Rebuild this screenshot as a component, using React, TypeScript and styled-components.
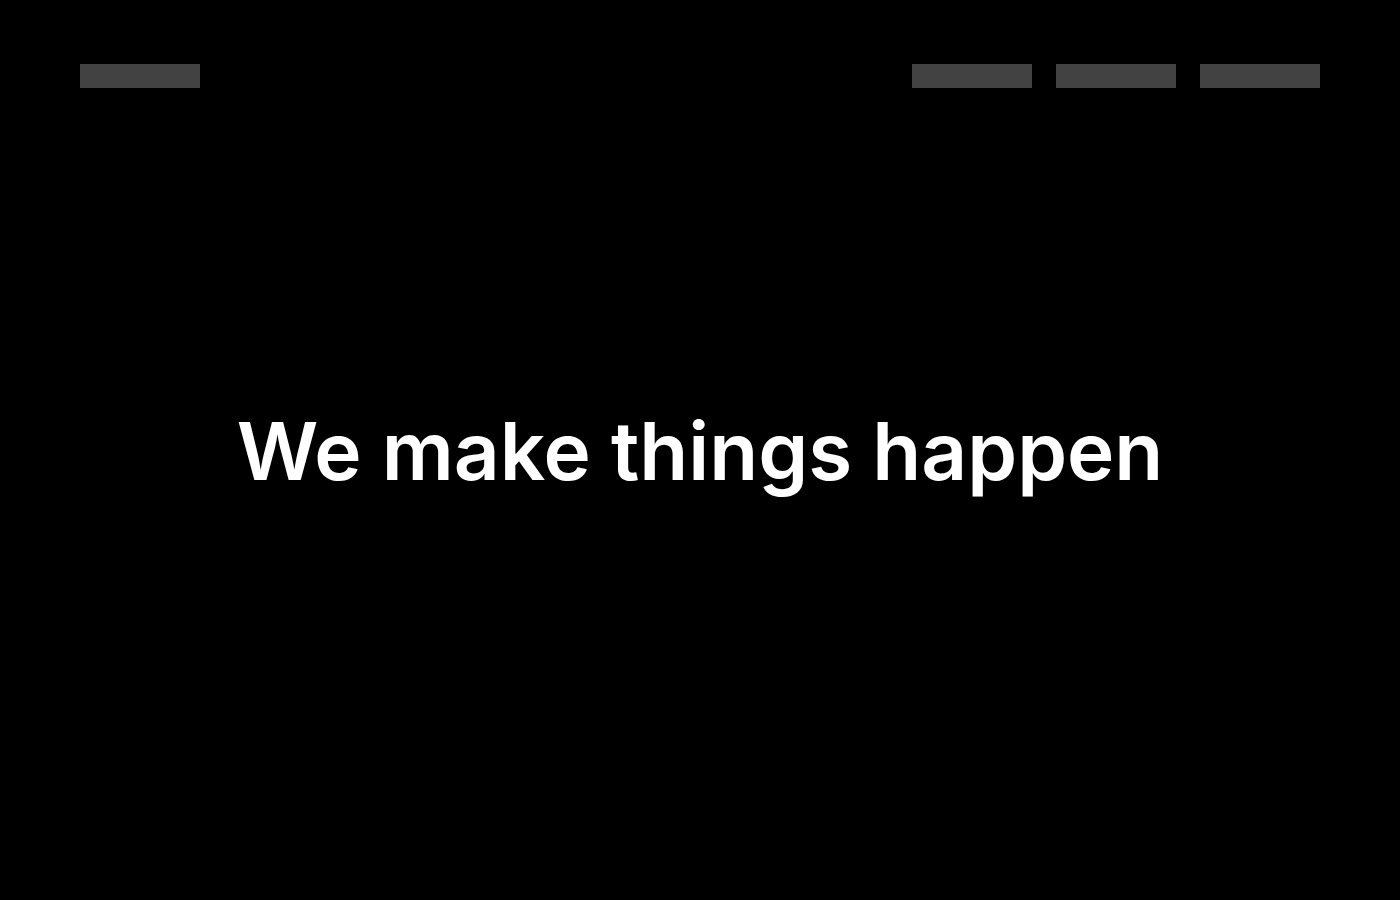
import React from "react";
import styled, { createGlobalStyle } from "styled-components";

const GlobalStyle = createGlobalStyle`
  html, body { margin: 0; padding: 0; background: #000; }
  body { font-family: Inter, "Noto Sans", sans-serif; color: #fff; }
  * { box-sizing: border-box; }
`;

const Page = styled.div`
  display: grid;
  grid-template: 1fr / 1fr;
  height: 100vh;
  background: #000;
`;

const Header = styled.header`
  grid-area: 1 / 1;
  align-self: start;
  display: flex;
  justify-content: space-between;
  align-items: center;
  padding: 64px 80px 0;
`;

const Nav = styled.nav`
  display: flex;
  gap: 24px;
`;

const Placeholder = styled.div<{ $w?: number }>`
  width: ${(p) => p.$w ?? 120}px;
  height: 24px;
  background: #424242;
`;

const Hero = styled.main`
  grid-area: 1 / 1;
  display: flex;
  align-items: center;
  justify-content: center;
`;

const Title = styled.h1`
  margin: 0;
  font-family: Inter, "Noto Sans", sans-serif;
  font-size: 80px;
  font-weight: 600;
  letter-spacing: 0;
  color: #fff;
  text-align: center;
`;

export default function App() {
  return (
    <>
      <GlobalStyle />
      <Page>
        <Header>
          <Placeholder aria-label="logo" />
          <Nav>
            <Placeholder />
            <Placeholder />
            <Placeholder />
          </Nav>
        </Header>
        <Hero>
          <Title>We make things happen</Title>
        </Hero>
      </Page>
    </>
  );
}
